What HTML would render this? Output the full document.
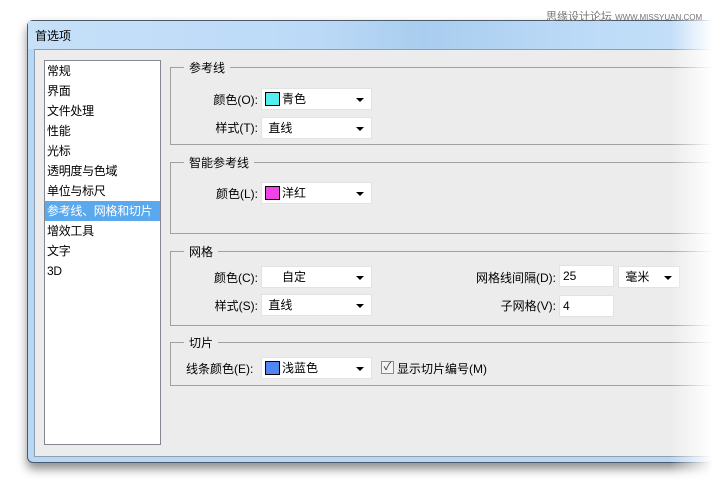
<!DOCTYPE html>
<html><head><meta charset="utf-8"><style>
*{margin:0;padding:0;box-sizing:border-box}
body{width:720px;height:484px;background:#fff;position:relative;overflow:hidden;font-family:"Liberation Sans","Noto Sans CJK SC",sans-serif;font-size:12px;color:#000}
.win{position:absolute;left:27px;top:20px;width:720px;height:443px;border-radius:6px 0 0 6px;background:#b9d7f3;border:1px solid #4a5a6a;box-shadow:0 6px 10px rgba(0,0,0,.45)}
.title{position:absolute;left:0;top:0;right:0;height:28px;background:linear-gradient(90deg,#c6e0f8 0%,#bcdaf7 40%,#a9cdef 55%,#bedcf8 80%,#c6e0f8 100%)}
.title span{position:absolute;left:7px;top:6px;font-size:12px}
.body{position:absolute;left:6px;top:28px;right:0;bottom:5px;background:#ececec;border:1px solid #8aa0b4}
.list{position:absolute;left:44px;top:60px;width:117px;height:385px;background:#fff;border:1px solid #828790}
.list div{height:20px;line-height:20px;padding-left:2px;font-size:12px;white-space:nowrap;letter-spacing:-0.3px}
.list .sel{background:#5aa9ef;color:#fff}
.grp{position:absolute;left:170px;width:600px;border:1px solid #a0a0a0;border-right:none}
.gl{position:absolute;left:184px;background:#ececec;padding:0 5px;font-size:12px}
.lbl{position:absolute;font-size:12px;text-align:right;white-space:nowrap}
.dd{position:absolute;background:#fff;border:1px solid #e2e2e2;height:22px;font-size:12px;line-height:20px;padding-left:3px}
.dd:after{content:"";position:absolute;right:7px;top:9px;border-left:4px solid transparent;border-right:4px solid transparent;border-top:4px solid #000}
.nt:after{display:none}
.sw{display:inline-block;width:15px;height:14px;border:1px solid #000;vertical-align:-3px;margin-right:2px}
.fade{position:absolute;right:0;top:0;width:50px;height:484px;background:linear-gradient(90deg,rgba(255,255,255,0),#fff 85%)}
.wm{position:absolute;left:546px;top:8px;font-size:11px;color:#777}
</style></head><body>
<div class="win"><div class="title"><span>首选项</span></div><div class="body"></div></div>
<div class="list">
<div>常规</div><div>界面</div><div>文件处理</div><div>性能</div><div>光标</div><div>透明度与色域</div><div>单位与标尺</div><div class="sel">参考线、网格和切片</div><div>增效工具</div><div>文字</div><div>3D</div>
</div>

<div class="grp" style="top:67px;height:78px"></div><div class="gl" style="top:59px">参考线</div>
<div class="lbl" style="left:190px;width:68px;top:91px">颜色(O):</div>
<div class="dd" style="left:261px;top:88px;width:111px"><span class="sw" style="background:#55eef0"></span>青色</div>
<div class="lbl" style="left:190px;width:68px;top:119px">样式(T):</div>
<div class="dd" style="left:261px;top:117px;width:111px">&nbsp;直线</div>

<div class="grp" style="top:162px;height:72px"></div><div class="gl" style="top:154px">智能参考线</div>
<div class="lbl" style="left:190px;width:68px;top:185px">颜色(L):</div>
<div class="dd" style="left:261px;top:182px;width:111px"><span class="sw" style="background:#ee44e6"></span>洋红</div>

<div class="grp" style="top:251px;height:75px"></div><div class="gl" style="top:243px">网格</div>
<div class="lbl" style="left:190px;width:68px;top:269px">颜色(C):</div>
<div class="dd" style="left:261px;top:266px;width:111px;padding-left:20px">自定</div>
<div class="lbl" style="left:440px;width:116px;top:297px">子网格(V):</div>
<div class="lbl" style="left:190px;width:68px;top:297px">样式(S):</div>
<div class="dd" style="left:261px;top:294px;width:111px">&nbsp;直线</div>
<div class="lbl" style="left:440px;width:116px;top:269px">网格线间隔(D):</div>
<div class="dd nt" style="left:559px;top:265px;width:55px">25</div>
<div class="dd" style="left:618px;top:266px;width:62px">&nbsp;毫米</div>
<div class="dd nt" style="left:559px;top:295px;width:55px">4</div>

<div class="grp" style="top:342px;height:44px"></div><div class="gl" style="top:334px">切片</div>
<div class="lbl" style="left:186px;top:360px">线条颜色(E):</div>
<div class="dd" style="left:261px;top:357px;width:111px"><span class="sw" style="background:#4f86ef"></span>浅蓝色</div>
<div style="position:absolute;left:381px;top:361px;width:13px;height:13px;border:1px solid #8a8a8a;background:#f4f4f4;font-size:11px;line-height:11px;text-align:center;color:#334">✓</div>
<div class="lbl" style="left:397px;top:360px">显示切片编号(M)</div>

<div class="fade"></div>
<div class="wm">思缘设计论坛 <span style="font-size:8px">WWW.MISSYUAN.COM</span></div>
</body></html>
